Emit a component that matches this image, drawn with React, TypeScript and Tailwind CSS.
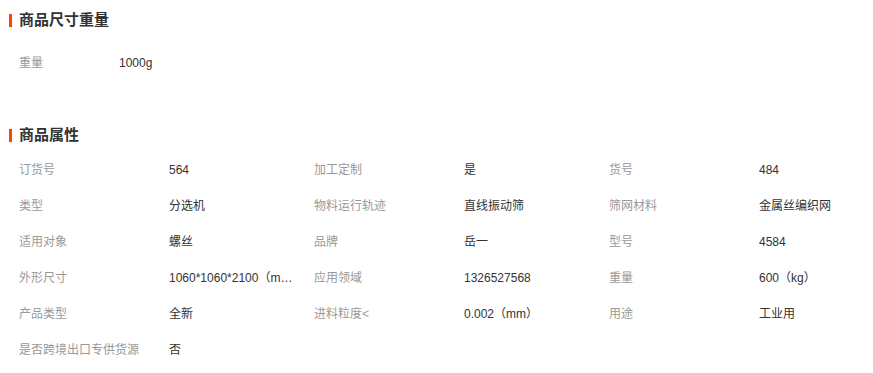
const sizeRows = [{ label: '重量', value: '1000g' }]

const attrs = [
  ['订货号', '564'],
  ['加工定制', '是'],
  ['货号', '484'],
  ['类型', '分选机'],
  ['物料运行轨迹', '直线振动筛'],
  ['筛网材料', '金属丝编织网'],
  ['适用对象', '螺丝'],
  ['品牌', '岳一'],
  ['型号', '4584'],
  ['外形尺寸', '1060*1060*2100（mm）'],
  ['应用领域', '1326527568'],
  ['重量', '600（kg）'],
  ['产品类型', '全新'],
  ['进料粒度<', '0.002（mm）'],
  ['用途', '工业用'],
  ['是否跨境出口专供货源', '否'],
]

function SectionTitle({ title }: { title: string }) {
  return (
    <div className="flex items-center h-[20px] pl-[9px]">
      <span className="w-[3px] h-[13px] bg-[#ff4400] mr-[7px]" />
      <h3 className="text-[15px] font-bold text-[#333] leading-[20px]">{title}</h3>
    </div>
  )
}

export default function App() {
  return (
    <div
      className="w-[873px] h-[373px] bg-white overflow-hidden pt-[10px]"
      style={{ fontFamily: '"Liberation Sans", "Noto Sans CJK SC", sans-serif' }}
    >
      <SectionTitle title="商品尺寸重量" />
      <div className="pt-[15px] pl-[19px]">
        {sizeRows.map((r) => (
          <div key={r.label} className="flex items-center h-[36px] text-[12px]">
            <span className="w-[100px] text-[#999]">{r.label}</span>
            <span className="text-[#333]">{r.value}</span>
          </div>
        ))}
      </div>

      <div className="mt-[44px]">
        <SectionTitle title="商品属性" />
      </div>
      <div className="pt-[7px] pl-[19px] grid grid-cols-[295px_295px_264px]">
        {attrs.map(([label, value], i) => (
          <div key={i} className="flex items-center h-[36px] text-[12px] min-w-0">
            <span className="w-[150px] shrink-0 text-[#999] whitespace-nowrap">{label}</span>
            <span className="w-[125px] text-[#333] truncate">{value}</span>
          </div>
        ))}
      </div>
    </div>
  )
}
